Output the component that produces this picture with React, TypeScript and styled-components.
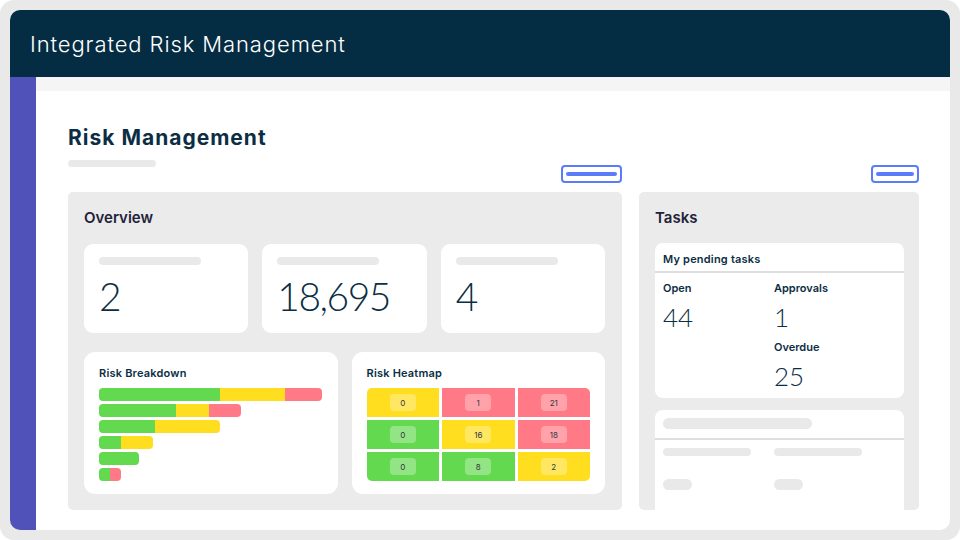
import React from "react";
import styled, { createGlobalStyle } from "styled-components";

const Global = createGlobalStyle`
  html, body { margin: 0; padding: 0; background: #ffffff; }
  * { box-sizing: border-box; }
  body { font-family: "Inter", "Noto Sans", sans-serif; }
`;

const NUM_FONT = `"Lato", "Inter", sans-serif`;

const C = {
  navy: "#042c43",
  ink: "#0c2e44",
  title: "#23223a",
  purple: "#5052b9",
  panel: "#ebebeb",
  skel: "#e9e9e9",
  blue: "#5b7cf9",
  green: "#63d94f",
  yellow: "#ffdd1f",
  red: "#ff7a86",
};

const Frame = styled.div`
  width: 960px;
  height: 540px;
  background: #e9e9e9;
  border-radius: 14px;
  padding: 10px;
`;

const Window = styled.div`
  width: 940px;
  height: 520px;
  border-radius: 10px;
  overflow: hidden;
  background: #ffffff;
  display: flex;
  flex-direction: column;
`;

const Header = styled.header`
  height: 67px;
  flex: none;
  background: ${C.navy};
  display: flex;
  align-items: center;
  padding-left: 20px;
`;

const AppTitle = styled.h1`
  margin: 0;
  font-weight: 300;
  font-size: 22px;
  letter-spacing: 0.9px;
  color: #ffffff;
`;

const Body = styled.div`
  flex: 1;
  display: flex;
  min-height: 0;
`;

const Sidebar = styled.aside`
  width: 26px;
  flex: none;
  background: ${C.purple};
`;

const Main = styled.main`
  flex: 1;
  display: flex;
  flex-direction: column;
  min-width: 0;
`;

const TopStrip = styled.div`
  height: 14px;
  flex: none;
  background: #f5f5f5;
`;

const Content = styled.div`
  flex: 1;
  display: grid;
  grid-template-columns: 554px 280px;
  grid-template-rows: auto auto 1fr;
  column-gap: 17px;
  padding: 36px 31px 20px 32px;
  min-height: 0;
`;

const PageTitle = styled.h2`
  grid-column: 1 / span 2;
  margin: 0 0 12px;
  font-size: 21px;
  line-height: 21px;
  font-weight: 700;
  letter-spacing: 1px;
  color: ${C.ink};
`;

const Toolbar = styled.div`
  display: flex;
  align-items: flex-start;
  justify-content: space-between;
  height: 23px;
  margin-bottom: 9px;
`;

const Skeleton = styled.div<{ $w: number; $h?: number }>`
  width: ${(p) => p.$w}px;
  height: ${(p) => p.$h ?? 8}px;
  border-radius: ${(p) => (p.$h ?? 8) / 2}px;
  background: ${C.skel};
  flex: none;
`;

const GhostButton = styled.div<{ $w: number }>`
  margin-top: 5px;
  margin-left: auto;
  width: ${(p) => p.$w}px;
  height: 18px;
  border: 2px solid ${C.blue};
  border-radius: 4px;
  display: flex;
  align-items: center;
  padding: 0 3px;
  &::after {
    content: "";
    flex: 1;
    height: 4px;
    border-radius: 2px;
    background: ${C.blue};
  }
`;

const Panel = styled.section<{ $right?: number }>`
  background: ${C.panel};
  border-radius: 5px;
  padding: 17px ${(p) => p.$right ?? 17}px 0 16px;
  overflow: hidden;
  min-height: 0;
`;

const PanelTitle = styled.h3<{ $gap?: number }>`
  margin: 0 0 ${(p) => p.$gap ?? 17}px;
  font-size: 15px;
  line-height: 18px;
  font-weight: 600;
  color: ${C.title};
`;

const StatGrid = styled.div`
  display: grid;
  grid-template-columns: repeat(3, 1fr);
  gap: 14px;
`;

const StatCard = styled.div`
  background: #ffffff;
  border-radius: 9px;
  height: 89px;
  padding: 13px 16px 0 15px;
`;

const StatValue = styled.div`
  margin-top: 12px;
  font-family: ${NUM_FONT};
  font-size: 39px;
  line-height: 39px;
  font-weight: 300;
  letter-spacing: -1.5px;
  color: ${C.ink};
`;

const ChartGrid = styled.div`
  display: grid;
  grid-template-columns: 1fr 1fr;
  gap: 14px;
  margin-top: 19px;
`;

const ChartCard = styled.div`
  background: #ffffff;
  border-radius: 11px;
  height: 142px;
  padding: 14px 15px 0 15px;
`;

const CardTitle = styled.h4`
  margin: 0 0 8px;
  font-size: 11px;
  line-height: 14px;
  font-weight: 600;
  letter-spacing: 0.2px;
  color: ${C.ink};
`;

const Bars = styled.div`
  display: flex;
  flex-direction: column;
  gap: 3px;
`;

const BarRow = styled.div`
  display: flex;
  height: 13px;
  border-radius: 4px;
  overflow: hidden;
  align-self: flex-start;
`;

const Seg = styled.div<{ $c: string }>`
  height: 100%;
  background: ${(p) => p.$c};
`;

const Heat = styled.div`
  display: grid;
  grid-template-columns: repeat(3, 1fr);
  grid-auto-rows: 29px;
  gap: 3px;
  border-radius: 5px;
  overflow: hidden;
`;

const HeatCell = styled.div<{ $c: string }>`
  background: ${(p) => p.$c};
  display: flex;
  align-items: center;
  justify-content: center;
`;

const HeatBadge = styled.span`
  width: 26px;
  height: 17px;
  border-radius: 4px;
  background: rgba(255, 255, 255, 0.3);
  display: flex;
  align-items: center;
  justify-content: center;
  font-size: 8px;
  color: #33393f;
`;

const TaskStack = styled.div`
  display: flex;
  flex-direction: column;
  gap: 12px;
`;

const TaskCard = styled.div<{ $h?: number }>`
  background: #ffffff;
  border-radius: 8px;
  height: ${(p) => (p.$h ? `${p.$h}px` : "auto")};
  flex: none;
  overflow: hidden;
`;

const TaskHead = styled.div`
  padding: 9px 8px 5px;
  border-bottom: 2px solid #dedede;
  font-size: 11px;
  line-height: 14px;
  font-weight: 600;
  letter-spacing: 0.2px;
  color: ${C.ink};
`;

const SkelHead = styled.div`
  padding: 8px 8px 9px;
  border-bottom: 2px solid #dedede;
`;

const TaskBody = styled.div`
  display: grid;
  grid-template-columns: 111px 1fr;
  row-gap: 9px;
  padding: 8px 8px 8px;
`;

const TaskStat = styled.div<{ $col: number }>`
  grid-column: ${(p) => p.$col};
`;

const TaskLabel = styled.div`
  font-size: 11px;
  line-height: 14px;
  font-weight: 600;
  color: ${C.ink};
  margin-bottom: 8px;
`;

const TaskValue = styled.div`
  font-family: ${NUM_FONT};
  font-size: 26px;
  line-height: 28px;
  font-weight: 300;
  color: ${C.ink};
`;

const SkelBody = styled.div`
  display: grid;
  grid-template-columns: 111px 1fr;
  row-gap: 23px;
  padding: 8px 8px 0;
`;

const breakdown: [number, number, number][] = [
  [121, 65, 37],
  [77, 33, 32],
  [56, 65, 0],
  [22, 32, 0],
  [40, 0, 0],
  [11, 0, 11],
];

const heat: [string, number][] = [
  [C.yellow, 0], [C.red, 1], [C.red, 21],
  [C.green, 0], [C.yellow, 16], [C.red, 18],
  [C.green, 0], [C.green, 8], [C.yellow, 2],
];

export default function App() {
  return (
    <>
      <Global />
      <Frame>
        <Window>
          <Header>
            <AppTitle>Integrated Risk Management</AppTitle>
          </Header>
          <Body>
            <Sidebar />
            <Main>
              <TopStrip />
              <Content>
                <PageTitle>Risk Management</PageTitle>
                <Toolbar>
                  <Skeleton $w={88} $h={7} />
                  <GhostButton $w={61} />
                </Toolbar>
                <Toolbar>
                  <GhostButton $w={48} />
                </Toolbar>
                <Panel>
                  <PanelTitle>Overview</PanelTitle>
                  <StatGrid>
                    {["2", "18,695", "4"].map((v) => (
                      <StatCard key={v}>
                        <Skeleton $w={102} />
                        <StatValue>{v}</StatValue>
                      </StatCard>
                    ))}
                  </StatGrid>
                  <ChartGrid>
                    <ChartCard>
                      <CardTitle>Risk Breakdown</CardTitle>
                      <Bars>
                        {breakdown.map(([g, y, r], i) => (
                          <BarRow key={i}>
                            {g > 0 && <Seg $c={C.green} style={{ width: g }} />}
                            {y > 0 && <Seg $c={C.yellow} style={{ width: y }} />}
                            {r > 0 && <Seg $c={C.red} style={{ width: r }} />}
                          </BarRow>
                        ))}
                      </Bars>
                    </ChartCard>
                    <ChartCard>
                      <CardTitle>Risk Heatmap</CardTitle>
                      <Heat>
                        {heat.map(([c, n], i) => (
                          <HeatCell key={i} $c={c}>
                            <HeatBadge>{n}</HeatBadge>
                          </HeatCell>
                        ))}
                      </Heat>
                    </ChartCard>
                  </ChartGrid>
                </Panel>
                <Panel $right={15}>
                  <PanelTitle $gap={16}>Tasks</PanelTitle>
                  <TaskStack>
                    <TaskCard>
                      <TaskHead>My pending tasks</TaskHead>
                      <TaskBody>
                        <TaskStat $col={1}>
                          <TaskLabel>Open</TaskLabel>
                          <TaskValue>44</TaskValue>
                        </TaskStat>
                        <TaskStat $col={2}>
                          <TaskLabel>Approvals</TaskLabel>
                          <TaskValue>1</TaskValue>
                        </TaskStat>
                        <TaskStat $col={2}>
                          <TaskLabel>Overdue</TaskLabel>
                          <TaskValue>25</TaskValue>
                        </TaskStat>
                      </TaskBody>
                    </TaskCard>
                    <TaskCard $h={130}>
                      <SkelHead>
                        <Skeleton $w={149} $h={11} />
                      </SkelHead>
                      <SkelBody>
                        <Skeleton $w={88} />
                        <Skeleton $w={88} />
                        <Skeleton $w={29} $h={11} />
                        <Skeleton $w={29} $h={11} />
                      </SkelBody>
                    </TaskCard>
                  </TaskStack>
                </Panel>
              </Content>
            </Main>
          </Body>
        </Window>
      </Frame>
    </>
  );
}
